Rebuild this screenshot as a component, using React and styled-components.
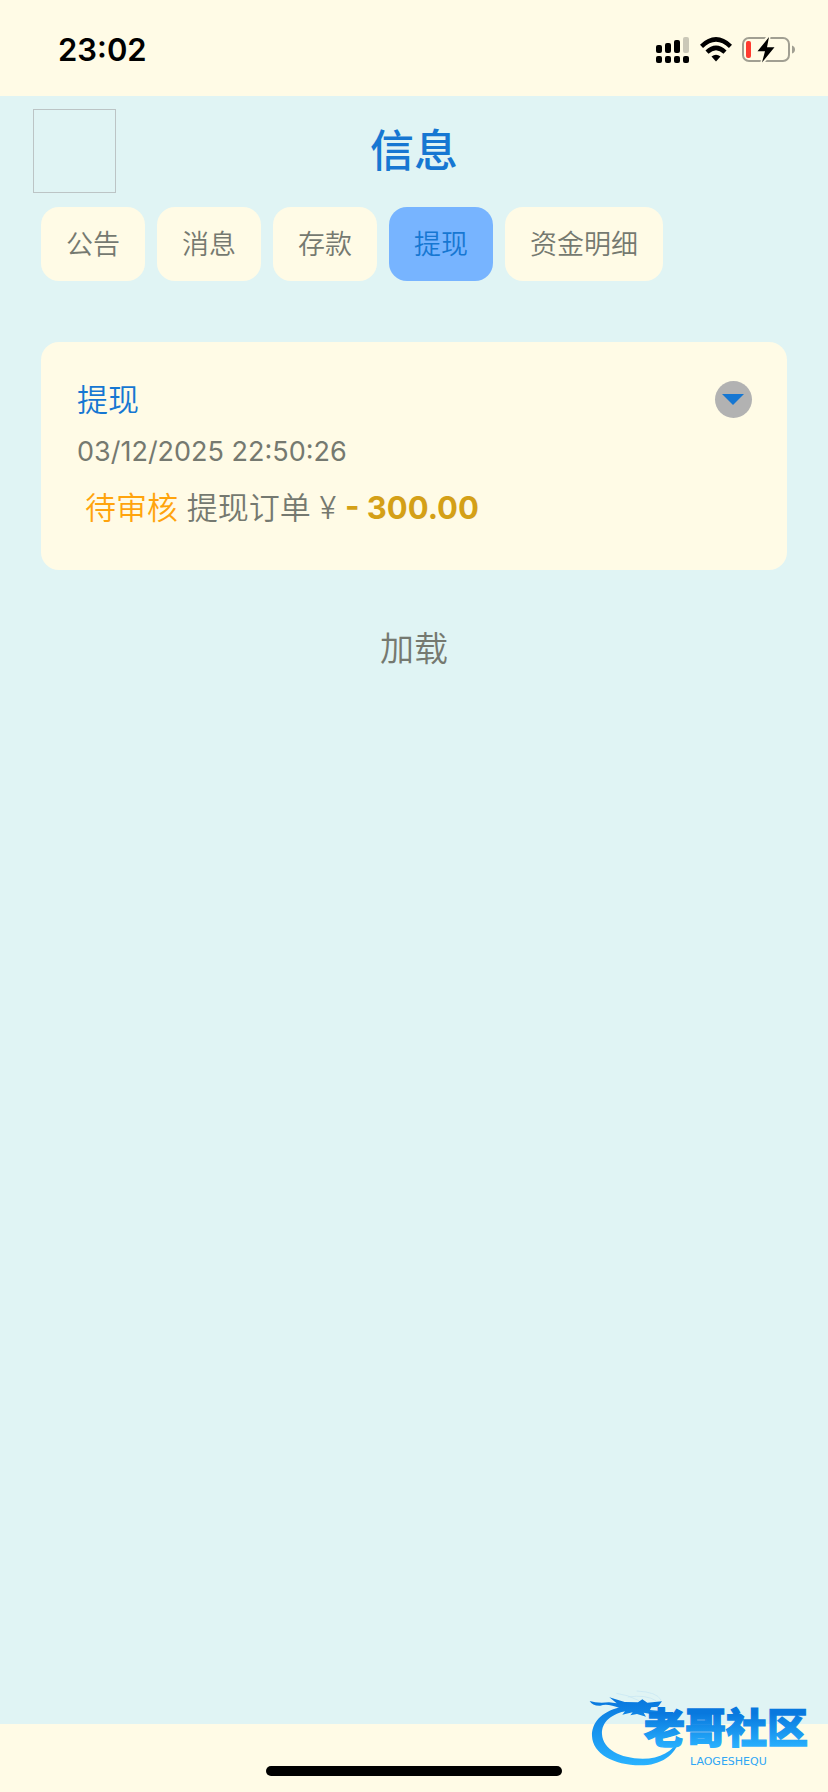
import React, { useState } from "react"
import styled, { createGlobalStyle } from "styled-components"

const GlobalStyle = createGlobalStyle`
  * {
    box-sizing: border-box;
  }

  body {
    margin: 0;
    background-color: #e0f4f4;
    color: #757970;
    font-family: Inter, "Noto Sans CJK SC", sans-serif;
  }

  button {
    margin: 0;
    padding: 0;
    border: none;
    background: none;
    color: inherit;
    font: inherit;
    cursor: pointer;
  }
`

const Page = styled.div`
  position: relative;
  min-height: 100vh;
  display: flex;
  flex-direction: column;
`

const StatusBar = styled.header`
  height: 96px;
  padding: 3px 32px 0 58px;
  display: flex;
  align-items: center;
  justify-content: space-between;
  background-color: #fffbe6;
  color: black;

  .time {
    font-size: 31px;
    font-weight: 600;
  }
`

const StatusIcons = styled.div`
  display: flex;
  align-items: center;
  gap: 10px;

  svg {
    display: block;
  }
`

const TitleBar = styled.div`
  padding: 13px 33px 14px;
  display: grid;
  grid-template-columns: 1fr auto 1fr;
  align-items: center;

  h1 {
    margin: 0;
    color: #1677d2;
    font-size: 44px;
    font-weight: 500;
    line-height: 64px;
  }
`

const BackButton = styled.button`
  width: 83px;
  height: 84px;

  && {
    border: 1px solid #bcc4c5;
  }
`

const Tabs = styled.nav`
  padding: 0 41px;
  display: flex;
  flex-wrap: wrap;
  gap: 12px;
`

const Tab = styled.button`
  height: 74px;

  && {
    padding: 0 25px 3px;
    border-radius: 18px;
    background-color: ${({ $active }) => ($active ? "#77b4ff" : "#fffbe6")};
    color: ${({ $active }) => ($active ? "#1677d2" : "#757970")};
    font-size: 27px;
    font-weight: 350;
  }
`

const Content = styled.main`
  flex: 1;
  padding: 61px 41px 0;
  display: flex;
  flex-direction: column;
  align-items: center;
  gap: 56px;
`

const Card = styled.article`
  width: 100%;
  padding: 35px 35px 35px 36px;
  border-radius: 18px;
  background-color: #fffbe6;
  display: flex;
  align-items: flex-start;
  justify-content: space-between;
`

const CardBody = styled.div`
  h2,
  p {
    margin: 0;
  }

  h2 {
    color: #1677d2;
    font-size: 31px;
    font-weight: 350;
    line-height: 46px;
  }

  time {
    display: block;
    margin: 8px 0;
    font-size: 27px;
    line-height: 42px;
  }
`

const Order = styled.p`
  padding-left: 8px;
  font-size: 31px;
  font-weight: 350;
  line-height: 54px;

  .status {
    color: #ffa40d;
  }

  .amount {
    color: #d4a017;
    font-weight: 700;
  }
`

const Toggle = styled.button`
  width: 37px;
  height: 37px;
  margin-top: 4px;

  && {
    border-radius: 50%;
    background-color: #b2b2b2;
  }

  svg {
    display: block;
    transform: ${({ $open }) => ($open ? "rotate(180deg)" : "none")};
  }
`

const LoadMore = styled.button`
  && {
    font-size: 34px;
    font-weight: 350;
    line-height: 46px;
  }
`

const BottomBar = styled.footer`
  height: 68px;
  padding-bottom: 16px;
  display: flex;
  align-items: flex-end;
  justify-content: center;
  background-color: #fffbe6;

  .indicator {
    width: 296px;
    height: 10px;
    border-radius: 5px;
    background-color: black;
  }
`

const Watermark = styled.svg`
  position: absolute;
  right: 0;
  bottom: 0;
  pointer-events: none;
`

const SignalIcon = () => (
  <svg width="34" height="28" viewBox="0 0 34 28" aria-hidden="true">
    <rect x="0" y="9" width="6" height="8" rx="2" />
    <rect x="9" y="7" width="6" height="10" rx="2" />
    <rect x="18" y="4" width="6" height="13" rx="2" />
    <rect x="27" y="1" width="6" height="16" rx="2" fill="#cbc8b8" />
    {[0, 9, 18, 27].map((x) => (
      <rect key={x} x={x} y="20" width="6" height="7" rx="2" />
    ))}
  </svg>
)

const WifiIcon = () => (
  <svg width="32" height="26" viewBox="0 0 32 26" aria-hidden="true">
    <path d="M1.5 9.3Q16-4.5 30.5 9.3" fill="none" stroke="black" strokeWidth="4.4" />
    <path d="M7 15.2Q16 6.6 25 15.2" fill="none" stroke="black" strokeWidth="4.4" />
    <path d="M11.5 19.6Q16 16 20.5 19.6L16 24.5Z" />
  </svg>
)

const BatteryIcon = () => (
  <svg width="54" height="28" viewBox="0 0 54 28" aria-hidden="true">
    <rect x="1" y="2" width="46" height="23" rx="6" fill="none" stroke="#a19f92" strokeWidth="2" />
    <path d="M50 9.5Q53 10.5 53 13.5T50 17.5Z" fill="#a19f92" />
    <rect x="4" y="5" width="5" height="17" rx="2" fill="#ff3b30" />
    <path
      d="M26.5 1L15.5 15.2H23L20.5 26L32.5 11.2H25Z"
      stroke="#fffbe6"
      strokeWidth="4"
      strokeLinejoin="round"
    />
    <path d="M27 1L15.5 15.2H23L20 26.5L32.5 11.2H25Z" />
  </svg>
)

const SiteLogo = () => (
  <Watermark width="258" height="112" viewBox="0 0 774 336" role="img" aria-label="老哥社区">
    <defs>
      <linearGradient id="ring" gradientUnits="userSpaceOnUse" x1="0" y1="60" x2="0" y2="255">
        <stop offset="0" stopColor="#0878de" />
        <stop offset="1" stopColor="#29b2ff" />
      </linearGradient>
      <linearGradient id="word" gradientUnits="userSpaceOnUse" x1="0" y1="100" x2="0" y2="205">
        <stop offset="0" stopColor="#0878de" />
        <stop offset="1" stopColor="#29b2ff" />
      </linearGradient>
    </defs>
    <g fill="url(#ring)">
      <path d="M150 82C92 96 65 130 66 168C68 220 130 256 211 256C272 256 318 226 328 176C309 214 270 236 218 236C150 236 99 207 96 163C94 127 123 101 176 91Z" />
      <path d="M59 63Q82 71 117 67L140 70L118 52L164 66L204 67L217 58L232 68L276 64L264 80L244 82L240 90L272 93L266 105L242 102L221 98L228 110L201 102L181 106L188 97L157 104L165 94L138 96L150 85Q113 69 91 77Q67 78 59 63Z" />
    </g>
    <path
      d="M139 40Q174 44 207 62M200 33Q261 36 273 60M173 51Q227 43 258 62"
      fill="none"
      stroke="#c6e6f3"
      strokeWidth="2"
    />
    <text
      x="222"
      y="190"
      fill="url(#word)"
      stroke="url(#word)"
      strokeWidth="4"
      fontFamily='"Noto Sans CJK SC", sans-serif'
      fontSize="123"
      fontWeight="900"
    >
      老哥社区
    </text>
    <text
      x="360"
      y="256"
      fill="#2fa6f5"
      fontFamily='"DejaVu Sans", sans-serif'
      fontSize="33"
      fontWeight="400"
    >
      LAOGESHEQU
    </text>
  </Watermark>
)

const tabs = ["公告", "消息", "存款", "提现", "资金明细"]

const App = () => {
  const [active, setActive] = useState("提现")
  const [open, setOpen] = useState(false)

  return (
    <Page>
      <GlobalStyle />
      <StatusBar>
        <span className="time">23:02</span>
        <StatusIcons>
          <SignalIcon />
          <WifiIcon />
          <BatteryIcon />
        </StatusIcons>
      </StatusBar>
      <TitleBar>
        <BackButton type="button" aria-label="返回" />
        <h1>信息</h1>
      </TitleBar>
      <Tabs>
        {tabs.map((tab) => (
          <Tab
            key={tab}
            type="button"
            $active={tab === active}
            aria-pressed={tab === active}
            onClick={() => setActive(tab)}
          >
            {tab}
          </Tab>
        ))}
      </Tabs>
      <Content>
        <Card>
          <CardBody>
            <h2>提现</h2>
            <time dateTime="2025-12-03T22:50:26">03/12/2025 22:50:26</time>
            <Order>
              <span className="status">待审核</span> 提现订单 ¥{" "}
              <span className="amount">- 300.00</span>
            </Order>
          </CardBody>
          <Toggle
            type="button"
            $open={open}
            aria-label="展开"
            aria-expanded={open}
            onClick={() => setOpen(!open)}
          >
            <svg width="37" height="37" viewBox="0 0 37 37" aria-hidden="true">
              <path d="M7 13H29L18 24Z" fill="#1677d2" />
            </svg>
          </Toggle>
        </Card>
        <LoadMore type="button">加载</LoadMore>
      </Content>
      <BottomBar>
        <div className="indicator" />
      </BottomBar>
      <SiteLogo />
    </Page>
  )
}

export default App
